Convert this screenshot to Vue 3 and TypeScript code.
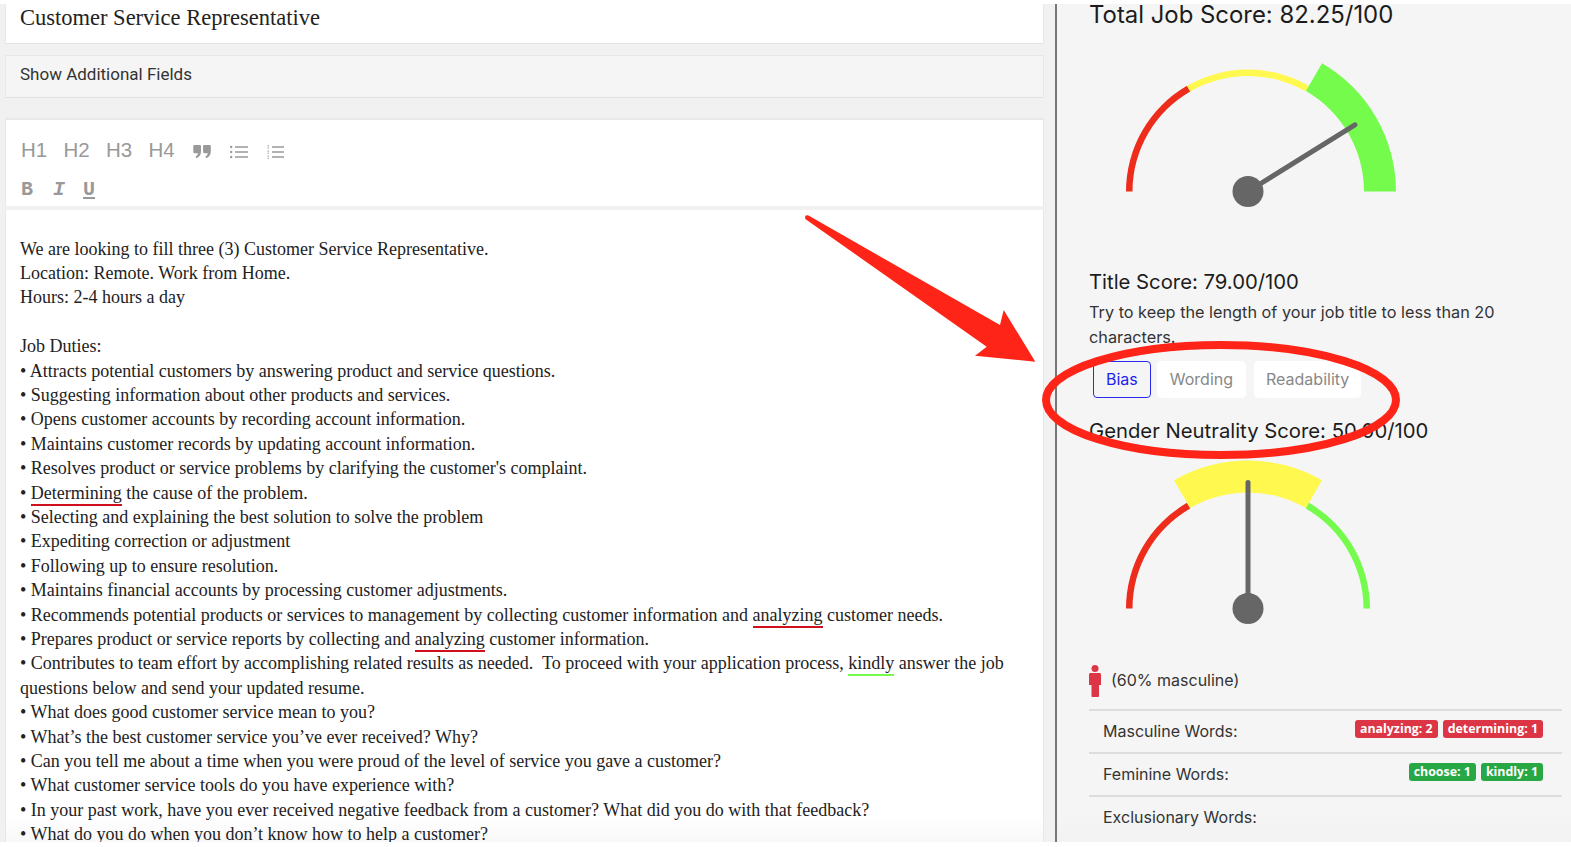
<template>
  <div class="page">
    <main class="left">
      <div class="card title-card">Customer Service Representative</div>
      <div class="card fields-card">Show Additional Fields</div>

      <div class="card toolbar">
        <div class="tool-row">
          <span v-for="h in headings" :key="h" class="tool-h">{{ h }}</span>
          <svg class="ico quote" viewBox="0 0 18 15" width="18" height="15">
            <path fill="#999" d="M1.500 1h5.300c.7 0 1.200.5 1.200 1.200v5.300c0 3.200-1.500 5.500-4.500 6.700l-1-1.700c1.500-.8 2.300-1.800 2.500-3.300H1.500C.8 9.200.3 8.700.3 8V2.200C.3 1.500.8 1 1.500 1zM11.300 1h5.300c.7 0 1.200.5 1.200 1.200v5.300c0 3.200-1.500 5.500-4.500 6.700l-1-1.700c1.500-.8 2.300-1.800 2.500-3.300h-3.500c-.7 0-1.200-.5-1.200-1.200V2.200c0-.7.500-1.200 1.200-1.200z" />
          </svg>
          <svg class="ico bullets" viewBox="0 0 18 14" width="18" height="14">
            <g fill="#999">
              <circle cx="1.200" cy="2" r="1.200" /><circle cx="1.200" cy="7" r="1.200" /><circle cx="1.200" cy="12" r="1.200" />
            </g>
            <path stroke="#999" stroke-width="1.500" d="M5 2h13M5 7h13M5 12h13" />
          </svg>
          <svg class="ico numbers" viewBox="0 0 18 14" width="18" height="14">
            <path stroke="#999" stroke-width="1" stroke-dasharray="1.500 .7" d="M1.200 0v4M1.200 5.500v3.500M1.200 10.500V14" />
            <path stroke="#999" stroke-width="1.500" d="M5 2h12M5 7h12M5 12h12" />
          </svg>
        </div>
        <div class="tool-row second">
          <span class="fmt">B</span>
          <span class="fmt italic">I</span>
          <span class="fmt under">U</span>
        </div>
      </div>

      <div class="card editor">
        <div v-for="(line, i) in lines" :key="i" class="line">
          <template v-for="(seg, j) in line" :key="j">
            <span v-if="typeof seg !== 'string'" :class="seg.kind">{{ seg.text }}</span>
            <template v-else>{{ seg }}</template>
          </template>
        </div>
      </div>
    </main>

    <aside class="panel">
      <h2 class="total">Total Job Score: 82.25/100</h2>
      <svg class="gauge first" viewBox="0 0 320 200" width="320" height="200">
        <path v-for="a in arcs(2)" :key="a.d" :d="a.d" :fill="a.color" />
        <line :x1="cx" :y1="cy" :x2="tip(82.25).x" :y2="tip(82.25).y" class="needle" />
        <circle :cx="cx" :cy="cy" r="15.500" fill="#666" />
      </svg>

      <h3 class="score">Title Score: 79.00/100</h3>
      <p class="hint">Try to keep the length of your job title to less than 20 characters.</p>

      <div class="tabs">
        <button v-for="t in tabs" :key="t" class="tab" :class="{ active: t === 'Bias' }">{{ t }}</button>
      </div>

      <h3 class="score neutral">Gender Neutrality Score: 50.00/100</h3>
      <svg class="gauge second-gauge" viewBox="0 0 320 200" width="320" height="200">
        <path v-for="a in arcs(1)" :key="a.d" :d="a.d" :fill="a.color" />
        <line :x1="cx" :y1="cy" :x2="tip(50).x" :y2="tip(50).y" class="needle" />
        <circle :cx="cx" :cy="cy" r="15.500" fill="#666" />
      </svg>

      <div class="lean">
        <svg viewBox="0 0 12 32" width="12" height="32">
          <circle cx="6" cy="3.500" r="3.500" fill="#dc3545" />
          <path fill="#dc3545" d="M1.500 8h9c.8 0 1.500.7 1.500 1.500V20h-2v11c0 .6-.4 1-1 1H3.500c-.6 0-1-.4-1-1V20H0V9.500C0 8.700.7 8 1.500 8z" />
        </svg>
        <span class="lean-text">(60% masculine)</span>
      </div>

      <div v-for="row in wordRows" :key="row.label" class="word-row">
        <span class="word-label">{{ row.label }}</span>
        <span class="badges">
          <span v-for="w in row.words" :key="w" class="badge" :class="row.tone">{{ w }}</span>
        </span>
      </div>
    </aside>

    <svg class="notes" viewBox="0 0 1571 847" width="1571" height="847" aria-hidden="true">
      <path
        class="arrow"
        d="M805 217.500Q805 214.500 808.500 215.500L1000 325 1003.700 310 1035.300 361.700 975 355.700 986.700 346.700 806 219.500Q805 218.500 805 217.500Z"
      />
      <ellipse cx="1221" cy="400" rx="175" ry="55" fill="none" stroke="#fe2417" stroke-width="8" />
    </svg>
  </div>
</template>

<script setup lang="ts">
type Mark = { text: string; kind: "red" | "green" }
type Segment = string | Mark

const headings = ["H1", "H2", "H3", "H4"]
const tabs = ["Bias", "Wording", "Readability"]

const red = (text: string): Mark => ({ text, kind: "red" })
const green = (text: string): Mark => ({ text, kind: "green" })

const lines: Segment[][] = [
  ["We are looking to fill three (3) Customer Service Representative."],
  ["Location: Remote. Work from Home."],
  ["Hours: 2-4 hours a day"],
  ["\u00a0"],
  ["Job Duties:"],
  ["• Attracts potential customers by answering product and service questions."],
  ["• Suggesting information about other products and services."],
  ["• Opens customer accounts by recording account information."],
  ["• Maintains customer records by updating account information."],
  ["• Resolves product or service problems by clarifying the customer's complaint."],
  ["• ", red("Determining"), " the cause of the problem."],
  ["• Selecting and explaining the best solution to solve the problem"],
  ["• Expediting correction or adjustment"],
  ["• Following up to ensure resolution."],
  ["• Maintains financial accounts by processing customer adjustments."],
  ["• Recommends potential products or services to management by collecting customer information and ", red("analyzing"), " customer needs."],
  ["• Prepares product or service reports by collecting and ", red("analyzing"), " customer information."],
  ["• Contributes to team effort by accomplishing related results as needed.  To proceed with your application process, ", green("kindly"), " answer the job questions below and send your updated resume."],
  ["• What does good customer service mean to you?"],
  ["• What’s the best customer service you’ve ever received? Why?"],
  ["• Can you tell me about a time when you were proud of the level of service you gave a customer?"],
  ["• What customer service tools do you have experience with?"],
  ["• In your past work, have you ever received negative feedback from a customer? What did you do with that feedback?"],
  ["• What do you do when you don’t know how to help a customer?"],
]

const wordRows = [
  { label: "Masculine Words:", tone: "danger", words: ["analyzing: 2", "determining: 1"] },
  { label: "Feminine Words:", tone: "success", words: ["choose: 1", "kindly: 1"] },
  { label: "Exclusionary Words:", tone: "", words: [] as string[] },
]

const cx = 159
const cy = 165.5
const colors = ["#ee2c1c", "#fff84f", "#75fb4c"]

function polar(r: number, deg: number) {
  const rad = (deg * Math.PI) / 180
  return { x: cx + r * Math.cos(rad), y: cy - r * Math.sin(rad) }
}

function sector(inner: number, outer: number, from: number, to: number) {
  const a = polar(outer, from)
  const b = polar(outer, to)
  const c = polar(inner, to)
  const d = polar(inner, from)
  return `M${a.x} ${a.y}A${outer} ${outer} 0 0 1 ${b.x} ${b.y}L${c.x} ${c.y}A${inner} ${inner} 0 0 0 ${d.x} ${d.y}Z`
}

// the band holding the score is drawn thicker than the other two
function arcs(active: number) {
  return colors.map((color, i) => {
    const from = 180 - i * 60
    const outer = i === active ? 148 : 122
    const inner = i === active ? 116 : 115.5
    return { color, d: sector(inner, outer, from, from - 60) }
  })
}

function tip(score: number) {
  return polar(126, 180 * (1 - score / 100))
}
</script>

<style scoped>
.page {
  position: relative;
  display: flex;
  width: 1571px;
  height: 847px;
  padding: 4px 0 5px;
  box-sizing: border-box;
  overflow: hidden;
  background: #fff;
}

.left {
  display: flex;
  flex-direction: column;
  flex: 0 0 1055px;
  box-sizing: border-box;
  padding: 0 11px 0 5px;
  overflow: hidden;
  background: #f1f1f1;
}

.card {
  flex: none;
  box-sizing: border-box;
  background: #fff;
  border-left: 1px solid #e8e8e8;
  border-right: 1px solid #e8e8e8;
}

.title-card {
  height: 40px;
  padding-left: 14px;
  border-bottom: 1px solid #e3e3e3;
  font: 22.500px/27px "Liberation Serif", serif;
  color: #222;
}

.fields-card {
  height: 43px;
  margin-top: 11px;
  padding-left: 14px;
  background: #f5f5f5;
  border-top: 1px solid #e8e8e8;
  border-bottom: 1px solid #e0e0e0;
  font: 17px/36px Roboto, sans-serif;
  color: #333;
}

.toolbar {
  height: 88px;
  margin-top: 20px;
  padding: 18px 0 0 15px;
  border-top: 2px solid #e8e8e8;
}

.tool-row {
  display: flex;
  align-items: center;
  height: 24px;
}

.tool-row.second {
  height: 20px;
  margin-top: 18px;
}

.tool-h {
  width: 42.500px;
  font: 20.500px/24px "Liberation Sans", sans-serif;
  color: #999;
}

.ico {
  flex: none;
}

.quote {
  margin: 3px 0 0 2px;
}

.bullets {
  margin: 3px 0 0 19px;
}

.numbers {
  margin: 3px 0 0 19px;
}

.fmt {
  color: #999;
  font: 700 20px/20px "Liberation Mono", monospace;
}

.italic {
  margin-left: 20px;
  font-style: italic;
}

.under {
  margin-left: 18px;
  text-decoration: underline;
  text-underline-offset: 2px;
}

.editor {
  flex: 1;
  min-height: 0;
  margin-top: 4px;
  padding: 26.500px 35px 0 14px;
  overflow: hidden;
  background: linear-gradient(to top, #f8f8f8, #fff 26px);
  font: 18px/24.400px "Liberation Serif", serif;
  color: #222;
  white-space: pre-wrap;
}

.red,
.green {
  padding-bottom: 1px;
}

.red {
  border-bottom: 2px solid #d0101c;
}

.green {
  border-bottom: 2px solid #75fb4c;
}

.panel {
  flex: 1;
  box-sizing: border-box;
  min-width: 0;
  padding: 0 9px 0 32px;
  overflow: hidden;
  background: linear-gradient(to top, #f2f2f2, #f5f5f5 30px);
  border-left: 2px solid #777;
  font-family: Inter, sans-serif;
  color: #1c1c1c;
}

.total {
  margin: 0;
  font-size: 23.900px;
  font-weight: 400;
  line-height: 22px;
}

.gauge {
  display: block;
}

.gauge.first {
  margin-bottom: 44px;
}

.second-gauge {
  margin-bottom: 22px;
}

.needle {
  stroke: #666;
  stroke-width: 5;
  stroke-linecap: round;
}

.score {
  margin: 0;
  font-size: 20.300px;
  font-weight: 400;
  line-height: 24px;
}

.hint {
  margin: 6px 0 0;
  font-size: 16.250px;
  line-height: 25px;
  color: #333;
}

.tabs {
  display: flex;
  gap: 6px;
  margin: 11px 0 0 4px;
}

.tab {
  height: 37px;
  padding: 0 12px 2px;
  border: 1px solid #fff;
  border-radius: 4px;
  background: #fff;
  font: 16px Inter, sans-serif;
  color: #888;
}

.tab:last-child {
  margin-left: 2px;
  padding: 0 11px 2px;
}

.tab.active {
  border-color: #2a2aee;
  color: #2222ee;
  background: transparent;
}

.neutral {
  margin-top: 21px;
}

.lean {
  display: flex;
  align-items: center;
  gap: 10px;
  height: 32px;
  margin-bottom: 12px;
  font-size: 16px;
  color: #333;
}

.lean-text {
  padding-bottom: 2px;
}

.word-row {
  display: flex;
  justify-content: space-between;
  height: 43px;
  box-sizing: border-box;
  padding: 9px 19px 0 14px;
  border-top: 2px solid #ddd;
  font-size: 16px;
  color: #333;
}

.word-label {
  padding-top: 1px;
}

.badges {
  display: flex;
  gap: 5px;
}

.badge {
  height: 18px;
  padding: 0 5px;
  border-radius: 3px;
  font: 700 12.400px/17px "Open Sans", sans-serif;
  color: #fff;
}

.danger {
  background: #dc3545;
}

.success {
  background: #28a745;
}

.notes {
  position: absolute;
  top: 0;
  left: 0;
  pointer-events: none;
}

.arrow {
  fill: #fe2417;
}
</style>

<style>
html,
body {
  margin: 0;
  overflow: hidden;
  background: #fff;
}
</style>
